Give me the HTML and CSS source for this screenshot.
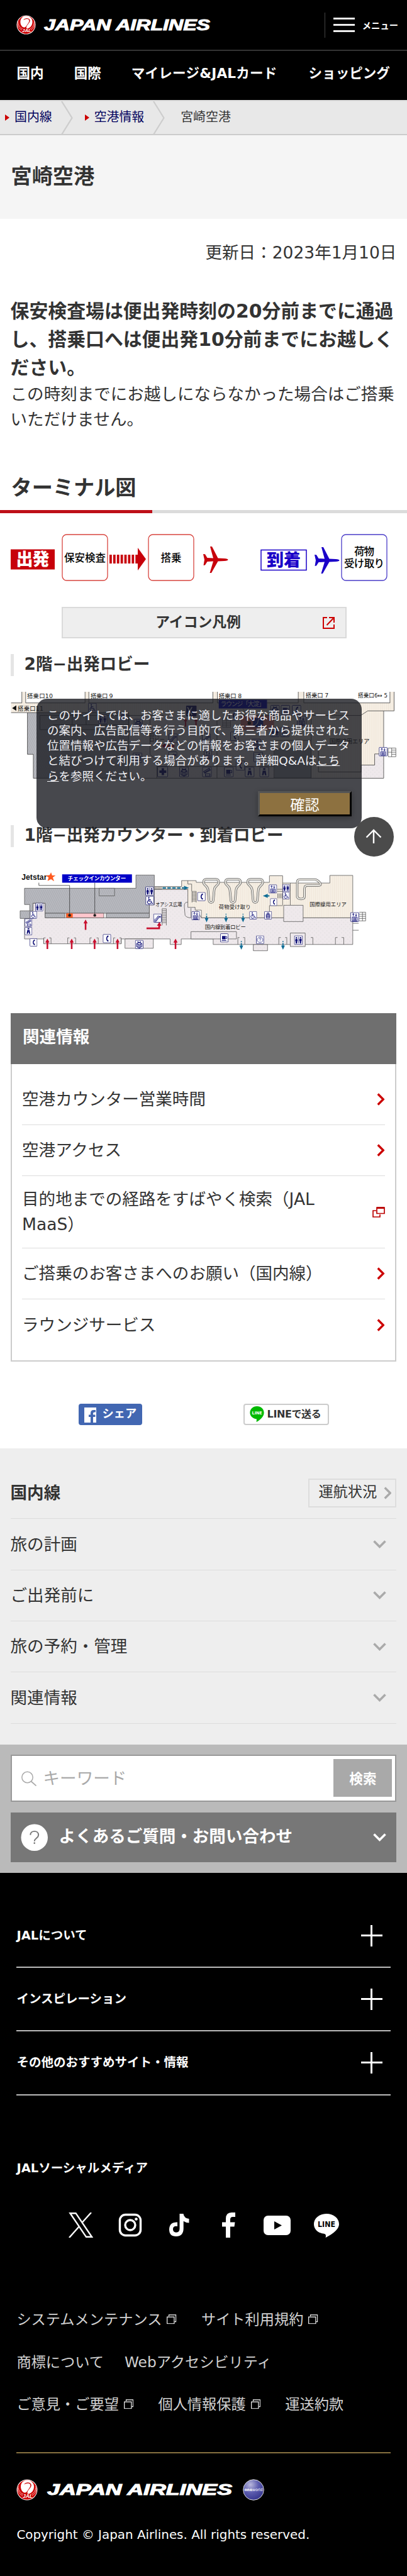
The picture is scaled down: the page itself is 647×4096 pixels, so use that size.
FILE: index.html
```html
<!DOCTYPE html>
<html lang="ja">
<head>
  <meta charset="utf-8">
  <title>宮崎空港 - JAL</title>
  <link rel="stylesheet" href="styles.css">
</head>
<body>
  <!-- shared icons -->
  <svg class="defs" width="0" height="0">
    <defs>
      <symbol id="crane" viewBox="0 0 34 34">
        <circle cx="17" cy="17" r="16.500" fill="#fff"/>
        <circle cx="17" cy="17" r="15.500" fill="#c00"/>
        <path d="M17 1.500C10 2 7 7 7 12c0 5 3 9 6 9.500 3 .5 4-2 6-5s4-5 3-8c-1-2.500-6-2-10 0 3-4 9-4 11-1 3 4-3 8-5 12-1 2.500-.5 4 1 4 5-1 9-5 9-12C28 6 23 1.500 17 1.500z" fill="#fff"/>
        <path d="M3 11c0 7 3 11 8 13M2 14c0 6 3 10 8 12M31 11c0 7-3 11-7 13M32 14c0 6-3 10-7 12" stroke="#fff" stroke-width=".7" fill="none"/>
        <text x="18" y="29.500" text-anchor="middle" font-family="Liberation Sans" font-size="8.500" font-weight="bold" font-style="italic" fill="#fff">JAL</text>
      </symbol>
      <symbol id="chev-right" viewBox="0 0 12 20"><path d="M1.500 1.500L10 10l-8.500 8.500" fill="none" stroke="currentColor" stroke-width="3.400"/></symbol>
      <symbol id="chev-down" viewBox="0 0 21 13"><path d="M1.500 1.500l9 9 9-9" fill="none" stroke="currentColor" stroke-width="3.600"/></symbol>
      <symbol id="window" viewBox="0 0 16 16"><path d="M.7 4.200h11.600v11H.7zM3.600 3V.9h11.600V12H13.200" fill="none" stroke="#fff" stroke-width="1.200"/></symbol>
      <symbol id="plane" viewBox="0 0 40 42"><path d="M0 12l3 .2L6.500 18l9.500.5L11 0h3l9.500 18.500 10 .5c8 .5 8 3.500 0 4l-10 .5L13 42h-2.500l5.500-18.500L6.500 24 3 29.500.5 30 2 21z"/></symbol>

      <pattern id="hatch" width="5" height="5" patternUnits="userSpaceOnUse" patternTransform="rotate(25)">
        <rect width="5" height="5" fill="#b8b9bf"/><path d="M0 0v5" stroke="#9fa1a8" stroke-width="2"/>
      </pattern>
      <pattern id="cream" width="6" height="6" patternUnits="userSpaceOnUse">
        <rect width="6" height="6" fill="#f6efe4"/><path d="M1 0v6" stroke="#efe5d8" stroke-width="1.500"/>
      </pattern>
      <pattern id="floor" width="12" height="12" patternUnits="userSpaceOnUse">
        <rect width="12" height="12" fill="#efe9ec"/><path d="M2 2h3v3H2zM8 8h3v3H8z" fill="#e5e2e3"/>
      </pattern>

      <!-- map pictograms -->
      <symbol id="m-box" viewBox="0 0 26 28"><rect x="1" y="1" width="24" height="26" rx="2" fill="#fff" stroke="#191970" stroke-width="1.600"/></symbol>
      <symbol id="m-wc" viewBox="0 0 26 28"><use href="#m-box"/><g fill="#101078"><circle cx="7" cy="7" r="2.200"/><path d="M4.500 10h5l1.500 7H9.300v7H4.700v-7H3z"/><circle cx="19" cy="7" r="2.200"/><path d="M15.500 10h7v7h-1.500v7h-4v-7h-1.500z"/></g><path d="M13 4v20" stroke="#101078" stroke-width="1.300"/></symbol>
      <symbol id="m-wheel" viewBox="0 0 26 28"><use href="#m-box"/><circle cx="10" cy="5.500" r="2" fill="#101078"/><path d="M10 8v8h7l3 7 2-1M10 11.500h6M8 14a5.500 5.500 0 1 0 8.500 6" fill="none" stroke="#101078" stroke-width="2"/></symbol>
      <symbol id="m-phone" viewBox="0 0 26 28"><use href="#m-box"/><path d="M17 4c-8 3-9 16 0 20l1-5-3-1c-1.500-2-1.500-6 0-8l3-1z" fill="#101078"/></symbol>
      <symbol id="m-lift" viewBox="0 0 26 28"><use href="#m-box"/><path d="M9 11V4M6.500 7L9 4l2.500 3M17 4v7M14.500 8l2.500 3 2.500-3M6 14h14v11H6zM10 16v8M13 16v8M16 16v8" fill="none" stroke="#101078" stroke-width="1.800"/></symbol>
      <symbol id="m-esc" viewBox="0 0 26 28"><use href="#m-box"/><path d="M3 22h5L17 9h6M3 18h4l9-12M17 9h6M3 24h6l9-12h5" fill="none" stroke="#101078" stroke-width="1.700"/></symbol>
      <symbol id="m-gift" viewBox="0 0 26 28"><use href="#m-box"/><path d="M5 11l8-3 8 3v10l-8 4-8-4zM5 11l8 4 8-4M13 15v10M9 13v10M17 13v10M13 8c-6-6-8 0 0 0 6-6 8 0 0 0" fill="none" stroke="#101078" stroke-width="1.900"/></symbol>
      <symbol id="m-cup" viewBox="0 0 26 28"><use href="#m-box"/><path d="M6 8h11v11H6zM5 21h14v2H5z" fill="#101078"/><path d="M17 10h4v6h-4" fill="none" stroke="#101078" stroke-width="1.700"/></symbol>
      <symbol id="m-info" viewBox="0 0 26 28"><use href="#m-box"/><circle cx="13" cy="14" r="9" fill="none" stroke="#101078" stroke-width="1.300"/><path d="M10 12c0-5 6-4 6-1 0 2-3 2-3 5M13 18v2" fill="none" stroke="#101078" stroke-width="1.600"/></symbol>
      <symbol id="m-bag" viewBox="0 0 26 28"><use href="#m-box"/><path d="M7 11h12v12H7zM10 6h6v4h-6zM9 15h8v4H9z" fill="none" stroke="#101078" stroke-width="2"/></symbol>
      <symbol id="m-man" viewBox="0 0 26 28"><use href="#m-box"/><path d="M10 4h6v4h-6zM9 10h8l2 13h-4l-2-8-2 8H7z" fill="#101078"/></symbol>
      <symbol id="m-ticket" viewBox="0 0 26 28"><use href="#m-box"/><path d="M4 13L19 4l3 5L7 17zM9 19h12v6H9zM7 15l13-8" fill="none" stroke="#101078" stroke-width="1.800"/></symbol>
      <symbol id="red-up" viewBox="0 0 14 32"><path d="M7 0l6.500 12H9.500v20h-5V12H.5z" fill="#c8102e"/></symbol>
      <symbol id="blue-down" viewBox="0 0 12 25"><path d="M4.500 0h3v3h-3zM4.500 6h3v7h4L6 25 .5 13h4z" fill="#0f6d96"/></symbol>
      <g id="belt">
        <path d="M-22 38q0-9 9-9h26q9 0 9 9c0 9-13 10-13 22l-3 30a6 6 0 0 1-12 0l-3-30C-9 48-22 47-22 38z" fill="none" stroke="#555" stroke-width="6.500"/>
        <path d="M-22 38q0-9 9-9h26q9 0 9 9c0 9-13 10-13 22l-3 30a6 6 0 0 1-12 0l-3-30C-9 48-22 47-22 38z" fill="none" stroke="#e6e4de" stroke-width="4"/>
      </g>
    </defs>
  </svg>

  <header class="header">
    <a class="logo" href="#">
      <svg class="logo-mark" viewBox="0 0 34 34"><use href="#crane"/></svg>
      <svg class="logo-name" viewBox="0 0 268 28"><text x="1" y="22" textLength="264" lengthAdjust="spacingAndGlyphs">JAPAN AIRLINES</text></svg>
    </a>
    <button class="menu-btn">
      <span class="bars"><i></i><i></i><i></i></span>
      <span>メニュー</span>
    </button>
  </header>

  <nav class="nav">
    <a href="#">国内</a>
    <a href="#">国際</a>
    <a class="mileage" href="#">マイレージ&amp;JALカード</a>
    <a href="#">ショッピング</a>
  </nav>

  <ol class="crumbs">
    <li><a href="#">国内線</a></li>
    <li><svg class="sep" viewBox="0 0 20 53"><path d="M1 0l16.500 26.500L1 53" fill="none" stroke="#cdcdcd" stroke-width="2.200"/></svg></li>
    <li><a href="#">空港情報</a></li>
    <li><svg class="sep" viewBox="0 0 20 53"><path d="M1 0l16.500 26.500L1 53" fill="none" stroke="#cdcdcd" stroke-width="2.200"/></svg></li>
    <li class="current">宮崎空港</li>
  </ol>

  <div class="page-title"><h1>宮崎空港</h1></div>

  <main>
    <p class="date">更新日：2023年1月10日</p>
    <p class="lead"><strong>保安検査場は便出発時刻の20分前までに通過し、搭乗口へは便出発10分前までにお越しください。</strong></p>
    <p class="note">この時刻までにお越しにならなかった場合はご搭乗いただけません。</p>

    <h2>ターミナル図</h2>

    <svg class="flow" viewBox="0 0 614 76">
      <rect x="0" y="24.500" width="70" height="32" fill="#c7000b"/>
      <text x="35" y="50" class="flow-tag" fill="#fff" textLength="53">出発</text>
      <rect x="82" y="1" width="72" height="73" rx="7" class="flow-dep"/>
      <text x="118" y="43.500" textLength="66">保安検査</text>
      <path d="M157 40h46" stroke="#c7000b" stroke-width="14" stroke-dasharray="3.800 2.100"/>
      <path d="M202 22l13 18-13 18z" fill="#c7000b"/>
      <rect x="219" y="1" width="72" height="73" rx="7" class="flow-dep"/>
      <text x="255" y="43.500" textLength="33">搭乗</text>
      <use href="#plane" x="306" y="20" width="40" height="42" fill="#c7000b"/>
      <rect x="398" y="25.500" width="72" height="32" fill="#fff" stroke="#1a00c8" stroke-width="1.500"/>
      <text x="434" y="51" class="flow-tag" fill="#1a00c8" textLength="54">到着</text>
      <use href="#plane" x="483" y="21" width="40" height="42" fill="#1a00c8"/>
      <rect x="526" y="1" width="72" height="73" rx="7" class="flow-arr"/>
      <text x="562" y="34" textLength="32">荷物</text>
      <text x="562" y="52.500" textLength="64">受け取り</text>
    </svg>

    <a class="legend-btn" href="#">
      <span>アイコン凡例</span>
      <svg viewBox="0 0 19 19"><path d="M7 1H1v17h17v-6M10 1h8v8M18 1L6.500 13" fill="none" stroke="#c00" stroke-width="2"/></svg>
    </a>

    <h3 class="floor-2">2階−出発ロビー</h3>
    <svg class="map" viewBox="0 0 1110 250">
      <path d="M0 32H31V0H42V32H213V0H224V32H581V0H594V32H827V0H843V32H1091V0H1103V55H1073V249H64V180H47V60H0z" fill="url(#cream)"/>
      <path d="M47 60H339V249H64V180H47z" fill="url(#hatch)"/>
      <path d="M339 68H757V249H339zM1008 211H1047V179H1073V249H1008z" fill="url(#floor)"/>
      <g fill="none" stroke="#444" stroke-width="1.500">
        <path d="M31 0V32H0M42 0V32H213V0M224 0V32H581V0M594 0V32H827V0M843 0V32H1091V0M1103 0V55H1027L1007 68H860M1073 55V179H1047V211H1008V231H885V165M1073 180V249H64V180H47V60H0M47 60H339V249M83 68H339V109H83zM176 60V95M216 60V95M120 95H339M339 68H440M400 80V180L420 200V249M420 215H757M593 80V249M640 68H820M864 68V249M757 140H864"/>
      </g>
      <rect x="757" y="163" width="107" height="85" fill="#a9adb6" stroke="#444"/>
      <rect x="661" y="69" width="96" height="41" fill="#f08080"/>
      <circle cx="686" cy="90" r="5" fill="#222"/>
      <rect x="598" y="23" width="139" height="25" fill="#0000c8"/>
      <text x="667" y="42" font-size="18" fill="#fff" text-anchor="middle" textLength="128">ラウンジ「大淀」</text>
      <path d="M668 48l10 22" stroke="#444"/>
      <use href="#m-wheel" x="221" y="32" width="26" height="27"/>
      <use href="#m-wc" x="251" y="65" width="26" height="28"/>
      <use href="#m-gift" x="310" y="60" width="24" height="24"/>
      <use href="#m-gift" x="353" y="78" width="26" height="28"/>
      <use href="#m-gift" x="350" y="175" width="28" height="30"/>
      <rect x="504" y="40" width="30" height="31" rx="2" fill="#191970"/>
      <path d="M508 44l13 23M521 44l-13 23" stroke="#fff" stroke-width="3"/>
      <use href="#red-up" x="496" y="75" width="13" height="26"/>
      <use href="#red-up" x="526" y="75" width="13" height="26"/>
      <path d="M434 156l10-8v5h26v6h-26v5z" fill="#c8102e"/>
      <use href="#m-esc" x="453" y="120" width="27" height="28"/>
      <use href="#m-esc" x="549" y="120" width="27" height="28"/>
      <use href="#m-esc" x="452" y="172" width="27" height="28"/>
      <use href="#m-lift" x="555" y="168" width="24" height="28"/>
      <rect x="422" y="216" width="29" height="29" rx="2" fill="#fff" stroke="#191970" stroke-width="1.600"/>
      <path d="M437 220v20M427 230h20" stroke="#101078" stroke-width="7"/>
      <use href="#m-gift" x="483" y="216" width="30" height="30"/>
      <use href="#m-ticket" x="549" y="216" width="30" height="30"/>
      <use href="#m-cup" x="612" y="216" width="30" height="30"/>
      <use href="#m-phone" x="646" y="198" width="28" height="29"/>
      <use href="#m-man" x="673" y="216" width="28" height="30"/>
      <use href="#m-man" x="715" y="216" width="28" height="30"/>
      <use href="#m-gift" x="746" y="38" width="28" height="29"/>
      <use href="#m-cup" x="776" y="38" width="28" height="29"/>
      <use href="#m-phone" x="808" y="38" width="28" height="29"/>
      <use href="#m-phone" x="627" y="54" width="28" height="29"/>
      <rect x="697" y="76" width="29" height="26" fill="#1d2fae"/>
      <path d="M702 98l8-8 2-10 8-2" stroke="#fff" stroke-width="2" fill="none"/>
      <use href="#m-lift" x="823" y="69" width="28" height="30"/>
      <use href="#m-wc" x="746" y="101" width="27" height="30"/>
      <use href="#m-wheel" x="775" y="101" width="27" height="30"/>
      <use href="#m-phone" x="631" y="114" width="25" height="28"/>
      <use href="#m-gift" x="691" y="135" width="29" height="30"/>
      <use href="#m-phone" x="697" y="173" width="29" height="30"/>
      <path d="M609 76h23v26h-23zM609 83h23M609 90h23M609 96h23M620 76v26" fill="none" stroke="#444"/>
      <use href="#m-lift" x="1057" y="159" width="29" height="27"/>
      <path d="M1086 162h22v25h-22zM1086 174h22M1096 162v25M1096 168h12M1096 180h12" fill="none" stroke="#444" stroke-width="1.300"/>
      <g font-size="17" fill="#111">
        <text x="46" y="19" textLength="74">搭乗口10</text>
        <text x="229" y="18" textLength="64">搭乗口 9</text>
        <text x="598" y="18" textLength="66">搭乗口 8</text>
        <text x="848" y="17" textLength="66">搭乗口 7</text>
        <text x="999" y="17" textLength="85" lengthAdjust="spacingAndGlyphs">搭乗口6↔ 5</text>
        <text x="19" y="54" textLength="74">搭乗口11</text>
        <path d="M3 47l12-8v16z"/>
        <text x="398" y="127" font-size="15">出発</text>
        <text x="398" y="144" font-size="15">ロビー</text>
        <text x="917" y="148" textLength="115">国際線用エリア</text>
      </g>
    </svg>

    <h3 class="floor-1">1階−出発カウンター・到着ロビー</h3>
    <svg class="map" viewBox="0 0 1110 250">
      <g stroke="#555" stroke-width="1.400">
        <path d="M38.600 142H63V98H98V140H398V103L412 58H520V95L548 140H984V217H582V201H490V217H458V201H317V215H94V201H38.600z" fill="url(#floor)"/>
        <path d="M38.600 55H359.500V17H412.500V103H398V127H98V98H63V120H53.600V102H38.600z" fill="url(#hatch)"/>
        <path d="M98 127h57v13H98zM274 127h124v13H274zM26 120h27.600v22H26zM253.500 55h44.500v22h-44.500z" fill="url(#hatch)"/>
        <path d="M159 127h108v13H159z" fill="#ffc6cd"/>
        <path d="M491 33H533V38H744V19H782V40H918V18H984V140H548V118H530V110H509V58H412V50H491z" fill="url(#cream)"/>
        <path d="M509 33v10h11v21M744 105h38M744 105v35M804 40v64M782 40v64" fill="none"/>
        <path d="M328 201h81.500v27H328zM518 180h131v21H518zM697.500 217h41v18h-41zM804 184h43v39h-43zM785 104h56v47h-56z" fill="url(#floor)"/>
        <path d="M509 95q-12 0-10 14l2 24q4 7 17 7V112M984 156h17M984 176h17M1003 124h18v25h-18M1003 130h18M1003 136h18M1003 142h18M1012 124v25" fill="none"/>
        <path d="M94 215v-17h5M115 215v-17h-5M163 215v-17h5M186 215v-17h-5M227 215v-17h5M251 215v-17h-5M295 215v-17h5M317 215v-17h-5M653 217v-20h5M673 217v-20h-5M771 217v-20h6M794 217v-20h-5M869 217v-20h-6M934 217v-20h6M958 217v-20h-6" fill="none"/>
        <path d="M412 51v8M416 51v8M420 51v8M424 51v8M428 51v8M432 51v8M521 64h12M521 68h12M521 72h12M521 76h12M521 80h12M521 84h12M521 88h12M521 92h12M435 114h12M435 119h12M435 124h12M435 129h12M435 134h12M435 139h12M435 144h12M435 149h12M435 154h12M435 114v48M447 114v48M521 64v32M533 64v32M768 70v14M772 70v14M776 70v14M780 70v14M766 58h16M766 64h16" fill="none"/>
      </g>
      <rect x="159" y="127.500" width="18.500" height="12" fill="#ff5a1f"/>
      <use href="#belt" x="576"/>
      <use href="#belt" x="639"/>
      <use href="#belt" x="703"/>
      <path d="M824 82V38q0-8 8-8h42q8 0 16 10 4 7-5 7H853q-8 0-8 10V78q0 8-10 8t-11-8" fill="none" stroke="#555" stroke-width="6.500"/>
      <path d="M824 82V38q0-8 8-8h42q8 0 16 10 4 7-5 7H853q-8 0-8 10V78q0 8-10 8t-11-8" fill="none" stroke="#e6e4de" stroke-width="4"/>
      <path d="M80 39v8h88.500v86M241 39v94" fill="none" stroke="#333" stroke-width="1.400"/>
      <circle cx="168.500" cy="133" r="4" fill="#222"/>
      <circle cx="241" cy="133" r="4" fill="#222"/>
      <rect x="147" y="15" width="201" height="24" fill="#0000c8"/>
      <text x="247" y="33" font-size="16" font-weight="bold" fill="#fff" text-anchor="middle" textLength="168">チェックインカウンター</text>
      <text x="30" y="31" font-family="Liberation Sans" font-size="23" font-weight="bold" fill="#111" textLength="73" lengthAdjust="spacingAndGlyphs">Jetstar</text>
      <path d="M115 9l3 9 10 0-8 6 4 11-9-6-10 5 3-10-8-6 11-1z" fill="#ff5a1f"/>
      <g>
        <use href="#m-wc" x="385" y="50" width="28" height="27"/>
        <use href="#m-wheel" x="386" y="77" width="27" height="27"/>
        <use href="#m-wc" x="69" y="97" width="24" height="25"/>
        <use href="#m-wheel" x="53" y="121" width="23" height="22"/>
        <use href="#m-ticket" x="39" y="142" width="22" height="24"/>
        <use href="#m-man" x="39" y="166" width="22" height="25"/>
        <use href="#m-phone" x="53" y="199" width="23" height="24"/>
        <use href="#m-phone" x="263" y="187" width="26" height="26"/>
        <use href="#m-gift" x="356" y="204" width="26" height="26"/>
        <use href="#m-esc" x="409" y="128" width="25" height="26"/>
        <use href="#m-lift" x="519" y="121" width="25" height="26"/>
        <use href="#m-phone" x="535" y="66" width="26" height="26"/>
        <use href="#m-lift" x="742" y="44" width="24" height="26"/>
        <use href="#m-wc" x="781" y="43" width="22" height="23"/>
        <use href="#m-wheel" x="781" y="65" width="22" height="22"/>
        <use href="#m-phone" x="745" y="84" width="22" height="22"/>
        <use href="#m-wheel" x="685" y="121" width="24" height="24"/>
        <use href="#m-bag" x="728" y="121" width="24" height="24"/>
        <use href="#m-cup" x="601" y="185" width="26" height="26"/>
        <use href="#m-info" x="704" y="191" width="26" height="25"/>
        <use href="#m-wc" x="814" y="191" width="27" height="27"/>
        <use href="#m-lift" x="976" y="124" width="27" height="28"/>
      </g>
      <use href="#red-up" x="98" y="199" width="13" height="32"/>
      <use href="#red-up" x="168" y="199" width="13" height="32"/>
      <use href="#red-up" x="234" y="199" width="13" height="32"/>
      <use href="#red-up" x="300" y="199" width="13" height="32"/>
      <use href="#red-up" x="467" y="199" width="13" height="32"/>
      <use href="#red-up" x="208" y="144" width="13" height="32"/>
      <path d="M390 168h34v-5h-4l7-11 6 11h-4v10h-39z" fill="#c8102e"/>
      <use href="#blue-down" x="557" y="128" width="12" height="25"/>
      <use href="#blue-down" x="613" y="128" width="12" height="25"/>
      <use href="#blue-down" x="662" y="128" width="12" height="25"/>
      <use href="#blue-down" x="657" y="207" width="12" height="25"/>
      <use href="#blue-down" x="777" y="207" width="12" height="25"/>
      <path d="M436 54h62" stroke="#0f6d96" stroke-width="4" stroke-dasharray="10 4"/>
      <path d="M498 48l14 6-14 6zM739 71l-14 6 14 6zM739 75h5v4h-5z" fill="#0f6d96"/>
      <g font-size="15" fill="#111">
        <text x="416" y="106" textLength="76" lengthAdjust="spacingAndGlyphs">オアシス広場</text>
        <text x="598" y="115" textLength="92">荷物受け取り</text>
        <text x="558" y="172" textLength="118">国内線到着ロビー</text>
        <text x="860" y="107" textLength="106">国際線用エリア</text>
      </g>
    </svg>

    <section class="related">
      <h2>関連情報</h2>
      <ul>
        <li><a href="#">空港カウンター営業時間</a><svg class="chev"><use href="#chev-right"/></svg></li>
        <li><a href="#">空港アクセス</a><svg class="chev"><use href="#chev-right"/></svg></li>
        <li><a href="#">目的地までの経路をすばやく検索（JAL MaaS）</a><svg class="win" viewBox="0 0 20 18"><path d="M7 2h12v9.500H7zM6 7H1v10h11v-4" fill="none" stroke="#b00" stroke-width="1.700"/><path d="M7 2.500h12" stroke="#b00" stroke-width="3"/></svg></li>
        <li><a href="#">ご搭乗のお客さまへのお願い（国内線）</a><svg class="chev"><use href="#chev-right"/></svg></li>
        <li><a href="#">ラウンジサービス</a><svg class="chev"><use href="#chev-right"/></svg></li>
      </ul>
    </section>

    <div class="share">
      <a class="share-fb" href="#">
        <svg viewBox="0 0 21 24"><path d="M1 0h19v24h-5v-9h3.500v-3.500H15V9.500q0-2 2-2h2V4h-3q-5 0-5 5v2.500H8V15h3v9H1z" fill="#fff"/></svg>
        <span>シェア</span>
      </a>
      <a class="share-line" href="#">
        <svg viewBox="0 0 24 27"><path d="M12 0C5 0 0 5 0 11c0 6 5 10 11 11 1 .5 0 3 0 5 6-3 13-9 13-16C24 5 19 0 12 0z" fill="#00b900"/><text x="12" y="14" text-anchor="middle" font-size="7" font-weight="bold" fill="#fff" textLength="17">LINE</text></svg>
        <span>LINEで送る</span>
      </a>
    </div>
  </main>

  <section class="local-nav">
    <div class="local-head">
      <h2>国内線</h2>
      <a href="#">運航状況<svg class="chev"><use href="#chev-right"/></svg></a>
    </div>
    <ul>
      <li>旅の計画<svg><use href="#chev-down"/></svg></li>
      <li>ご出発前に<svg><use href="#chev-down"/></svg></li>
      <li>旅の予約・管理<svg><use href="#chev-down"/></svg></li>
      <li>関連情報<svg><use href="#chev-down"/></svg></li>
    </ul>
  </section>

  <section class="search-area">
    <form class="search">
      <svg viewBox="0 0 24 24"><circle cx="9.500" cy="10" r="8.700" fill="none" stroke="#aaa" stroke-width="1.500"/><path d="M15.500 16.500l8 7" stroke="#aaa" stroke-width="1.700"/></svg>
      <input type="text" placeholder="キーワード">
      <button type="button">検索</button>
    </form>
    <div class="faq">
      <svg class="faq-icon" viewBox="0 0 44 44"><circle cx="22" cy="22" r="21.500" fill="#fff"/><path d="M15.500 18c0-8 13-8 13 0 0 5-6.500 5-6.500 10" fill="none" stroke="#777" stroke-width="2"/><circle cx="22" cy="31" r="1.300" fill="#777"/></svg>
      <span>よくあるご質問・お問い合わせ</span>
      <svg class="down"><use href="#chev-down"/></svg>
    </div>
  </section>

  <footer>
    <ul class="accordion">
      <li>JALについて<i class="plus"></i></li>
      <li>インスピレーション<i class="plus"></i></li>
      <li>その他のおすすめサイト・情報<i class="plus"></i></li>
    </ul>

    <h2>JALソーシャルメディア</h2>
    <div class="social">
      <svg viewBox="0 0 40 40"><path d="M2.500 1.200h9L37 38.800h-9zM36 0L22 15.500M17 22L1 40" fill="none" stroke="#fff" stroke-width="2.400"/></svg>
      <svg viewBox="0 0 40 40"><rect x="3.500" y="3.500" width="33" height="33" rx="9" fill="none" stroke="#fff" stroke-width="3.400"/><circle cx="20" cy="20" r="8" fill="none" stroke="#fff" stroke-width="3.400"/><circle cx="29.500" cy="10.500" r="2.300" fill="#fff"/></svg>
      <svg viewBox="0 0 40 40"><path d="M20.500 2h6q1 7 9 8v6.500q-5 0-8.800-2.700V26q-.5 12-11.700 12T4 26.500Q4.500 15 17 15.500v6.500q-7-1-7 4.500 0 5 5 5.200 5.500-.2 5.500-6z" fill="#fff"/></svg>
      <svg viewBox="0 0 40 40"><path d="M16 40V22.500H10V15.500h6V10Q16 0 25 0h6v7h-4q-4 0-4 4v4.500h7.500l-1 7H23V40z" fill="#fff"/></svg>
      <svg class="yt" viewBox="0 0 44 40"><rect x="0" y="5" width="43" height="31" rx="7" fill="#fff"/><path d="M17 14l12 6.500-12 6.500z" fill="#000"/></svg>
      <svg viewBox="0 0 40 40"><path d="M20 2C9 2 0 9 0 18.500 0 27 7 33 17 34q3 .5 1.500 6Q40 29 40 18.500C40 9 31 2 20 2z" fill="#fff"/><text x="20" y="23" text-anchor="middle" font-size="11.500" font-weight="bold" fill="#000" textLength="28" lengthAdjust="spacingAndGlyphs">LINE</text></svg>
    </div>

    <div class="links">
      <p><a href="#">システムメンテナンス<svg><use href="#window"/></svg></a><a href="#">サイト利用規約<svg><use href="#window"/></svg></a></p>
      <p><a href="#">商標について</a><a href="#">Webアクセシビリティ</a></p>
      <p><a href="#">ご意見・ご要望<svg><use href="#window"/></svg></a><a href="#">個人情報保護<svg><use href="#window"/></svg></a><a href="#">運送約款</a></p>
    </div>

    <div class="foot-logo">
      <svg class="foot-mark" viewBox="0 0 34 34"><use href="#crane"/></svg>
      <svg class="foot-name" viewBox="0 0 298 29"><text x="1" y="23" textLength="294" lengthAdjust="spacingAndGlyphs">JAPAN AIRLINES</text></svg>
      <svg class="oneworld" viewBox="0 0 34 34">
        <defs><radialGradient id="ow" cx=".35" cy=".25" r=".8"><stop offset="0" stop-color="#b9b8dd"/><stop offset=".5" stop-color="#5b5bae"/><stop offset="1" stop-color="#34348c"/></radialGradient></defs>
        <circle cx="17" cy="17" r="16.300" fill="url(#ow)" stroke="#ddd" stroke-width="1"/>
        <text x="17" y="19" text-anchor="middle" font-size="6.500" fill="#fff" textLength="29" lengthAdjust="spacingAndGlyphs"><tspan font-weight="bold">one</tspan>world</text>
      </svg>
    </div>
    <p class="copy">Copyright © Japan Airlines. All rights reserved.</p>
  </footer>

  <div class="cookie">
    <p>このサイトでは、お客さまに適したお得な商品やサービスの案内、広告配信等を行う目的で、第三者から提供された位置情報や広告データなどの情報をお客さまの個人データと結びつけて利用する場合があります。詳細Q&amp;Aは<a href="#">こち<br>ら</a>を参照ください。</p>
    <button>確認</button>
  </div>
  <a class="to-top" href="#"><svg viewBox="0 0 26 24"><path d="M13 23V2M1.500 13.500L13 2l11.500 11.500" fill="none" stroke="#fff" stroke-width="2.400"/></svg></a>
</body>
</html>
```
FILE: styles.css
```css
* {
  box-sizing: border-box;
  margin: 0;
  padding: 0;
}

body {
  position: relative;
  width: 647px;
  height: 4096px;
  overflow-x: hidden;
  background: #fff;
  color: #333;
  font-family: "DejaVu Sans", "Noto Sans CJK JP", sans-serif;
  font-size: 26.54px;
  line-height: 39.8px;
}

a {
  color: inherit;
  text-decoration: none;
}

ul, ol {
  list-style: none;
}

svg {
  display: block;
  flex: none;
}

.defs {
  position: absolute;
}

/* header */
.header {
  display: flex;
  align-items: center;
  justify-content: space-between;
  height: 81.3px;
  padding: 0 14px 0 26px;
  background: #000;
  border-bottom: 2px solid #333;
}

.logo {
  display: flex;
  align-items: center;
  gap: 12px;
}

.logo-mark {
  width: 31px;
  height: 31px;
}

.logo-name {
  width: 268px;
  height: 28px;
}

.logo-name text,
.foot-name text {
  fill: #fff;
  font-family: "Liberation Sans", sans-serif;
  font-size: 23px;
  font-weight: bold;
  font-style: italic;
  stroke: #fff;
  stroke-width: 1px;
}

.menu-btn {
  display: flex;
  align-items: center;
  gap: 12px;
  height: 40px;
  padding-left: 13px;
  border: none;
  border-left: 1px solid #444;
  background: none;
  color: #fff;
  font-family: inherit;
  font-size: 14.3px;
  font-weight: bold;
}

.bars {
  display: flex;
  flex-direction: column;
  justify-content: space-between;
  width: 34px;
  height: 23px;
}

.bars i {
  height: 3px;
  background: #eee;
}

.nav {
  display: flex;
  align-items: center;
  gap: 48px;
  height: 78px;
  padding: 0 0 7px 26.5px;
  background: #000;
  color: #fff;
  font-size: 21.57px;
  font-weight: bold;
  white-space: nowrap;
}

.nav .mileage {
  margin-right: 2px;
  letter-spacing: .2px;
}

/* breadcrumb */
.crumbs {
  display: flex;
  align-items: center;
  height: 56.2px;
  padding-left: 8px;
  background: #e8e8e8;
  border-top: 2px solid #ddd;
  border-bottom: 2px solid #ccc;
  font-size: 19.9px;
}

.crumbs a {
  display: flex;
  align-items: center;
  gap: 8px;
  color: #00005c;
}

.crumbs a::before {
  content: "";
  border-left: 7px solid #c00;
  border-top: 5.5px solid transparent;
  border-bottom: 5.5px solid transparent;
}

.crumbs .sep {
  width: 20px;
  height: 53px;
  margin: 0 18px 0 14px;
}

.crumbs .current {
  margin-left: 6px;
}

.page-title {
  height: 132.8px;
  padding: 41px 18px 0 17.5px;
  background: #f5f5f5;
}

h1 {
  font-size: 33.18px;
  line-height: 49.8px;
}

/* main */
main {
  height: 1954.6px;
  padding-top: 33.5px;
}

.date,
.lead,
.note {
  padding: 0 16.6px;
}

.date {
  text-align: right;
}

.lead {
  margin-top: 51.5px;
  font-size: 29.86px;
  line-height: 44.8px;
}

main > h2 {
  margin-top: 64px;
  padding: 0 17.5px 10.2px;
  border-bottom: 5px solid;
  border-image: linear-gradient(90deg, #be1018 242px, #dbdbdb 242px) 1;
  font-size: 33.18px;
  line-height: 49.8px;
}

.flow {
  width: 614px;
  height: 76px;
  margin: 32.5px 0 0 16.5px;
}

.flow text {
  font-size: 16.5px;
  font-weight: 500;
  text-anchor: middle;
}

.flow .flow-tag {
  font-size: 27px;
  font-weight: 900;
}

.flow-dep,
.flow-arr {
  fill: #fff;
  stroke: #d8453f;
  stroke-width: 1.3;
}

.flow-arr {
  stroke: #4a3cc8;
}

.legend-btn {
  display: flex;
  align-items: center;
  width: 453px;
  height: 50px;
  margin: 40.5px 0 0 98px;
  padding: 0 17px;
  background: #eee;
  border: 2px solid #dadada;
  font-size: 22.8px;
  font-weight: bold;
}

.legend-btn span {
  flex: 1;
  text-align: center;
}

.legend-btn svg {
  width: 19px;
  height: 19px;
}

h3 {
  height: 35px;
  margin: 24.5px 16.5px 0;
  padding-left: 17px;
  border-left: 5px solid #e5e5e5;
  font-size: 26.54px;
  line-height: 31px;
}

h3.floor-1 {
  margin-top: 74px;
}

.map {
  width: 614px;
  height: 138px;
  margin: 25px 0 0 16.5px;
}

.floor-1 + .map {
  margin-top: 35px;
}

.related {
  margin: 91px 16.6px 0;
}

.related h2 {
  height: 81px;
  padding: 18px 19.5px;
  background: #6f6f6f;
  color: #fff;
  font-size: 26.54px;
  line-height: 39.8px;
}

.related ul {
  height: 473px;
  padding: 16px 16.5px;
  border: 2px solid #ccc;
  border-top: none;
}

.related li {
  display: flex;
  align-items: center;
  justify-content: space-between;
  min-height: 81.4px;
  padding: 15.8px 0;
  border-bottom: 1.66px solid #ddd;
}

.related li:nth-child(3) {
  height: 114.5px;
}

.related li:last-child {
  border: none;
}

.related li a {
  width: 500px;
}

.chev {
  width: 12.5px;
  height: 20px;
  color: #c00;
}

.win {
  width: 20px;
  height: 18px;
}

.share {
  display: flex;
  margin-top: 67.5px;
}

.share a {
  display: flex;
  align-items: center;
  height: 33.5px;
  border-radius: 4px;
  font-weight: bold;
  white-space: nowrap;
}

.share-fb {
  width: 101px;
  margin: 0 161px 0 124.6px;
  padding: 3px 6px 0 8px;
  gap: 9px;
  background: #4267b2;
  color: #fff;
  font-size: 18.2px;
}

.share-fb svg {
  width: 21px;
  height: 24px;
}

.share-fb span {
  margin-top: -5px;
}

.share-line {
  width: 136px;
  padding: 0 8px;
  gap: 5px;
  border: 2px solid #ccc;
  font-size: 16px;
  letter-spacing: -.4px;
}

.share-line svg {
  width: 23px;
  height: 25px;
}

/* local navigation */
.local-nav {
  height: 471px;
  padding: 48px 16.6px 0;
  background: #eee;
}

.local-head {
  display: flex;
  justify-content: space-between;
  height: 64.6px;
  border-bottom: 1.66px solid #ddd;
}

.local-head h2 {
  padding-top: 3px;
  font-size: 26.54px;
}

.local-head a {
  display: flex;
  align-items: center;
  justify-content: space-between;
  width: 140px;
  height: 46.5px;
  padding: 0 6px 4px 14px;
  border: 2px solid #ddd;
  font-size: 23.22px;
}

.local-head .chev {
  margin-top: 4px;
  color: #aaa;
}

.local-nav li {
  display: flex;
  align-items: center;
  justify-content: space-between;
  height: 81.3px;
  padding-right: 16px;
  border-bottom: 1.66px solid #ddd;
}

.local-nav li svg,
.faq .down {
  width: 21px;
  height: 13px;
  color: #aaa;
}

/* search */
.search-area {
  height: 204.1px;
  padding: 16.5px 16.6px;
  background: #bababa;
}

.search {
  display: flex;
  align-items: center;
  height: 75px;
  padding: 0 5px 0 15px;
  background: #fff;
  border: 2px solid #999;
}

.search svg {
  width: 24px;
  height: 24px;
}

.search input {
  flex: 1;
  min-width: 0;
  height: 60px;
  margin-left: 11px;
  padding: 0 0 1px;
  border: none;
  outline: none;
  font-family: inherit;
  font-size: 26.54px;
}

.search input::placeholder {
  color: #a9a9a9;
}

.search button {
  width: 93px;
  height: 60px;
  margin-top: -2px;
  border: none;
  background: #a9a9a9;
  color: #fff;
  font-family: inherit;
  font-size: 21.57px;
  font-weight: bold;
}

.faq {
  display: flex;
  align-items: center;
  height: 79.6px;
  margin-top: 16.5px;
  padding: 0 16.5px;
  background: #777;
  color: #fff;
  font-weight: bold;
}

.faq-icon {
  width: 43.5px;
  height: 43.5px;
}

.faq span {
  flex: 1;
  margin: -4px 0 0 17px;
}

.faq .down {
  color: #fff;
}

/* footer */
footer {
  height: 1118px;
  padding: 50px 26.4px 0;
  background: #000;
  color: #fff;
}

.accordion li {
  display: flex;
  align-items: center;
  justify-content: space-between;
  height: 101.2px;
  border-bottom: 2px solid #bbb;
  padding-right: 13px;
  font-size: 19.5px;
  font-weight: bold;
}

.plus {
  width: 34px;
  height: 34px;
  background:
    linear-gradient(#fff, #fff) center / 100% 3px no-repeat,
    linear-gradient(#fff, #fff) center / 3px 100% no-repeat;
}

footer h2 {
  margin-top: 96px;
  font-size: 19.5px;
}

.social {
  display: flex;
  gap: 38px;
  margin: 51px 0 0 83px;
}

.social svg {
  width: 40px;
  height: 40px;
}

.social .yt {
  width: 44px;
  margin: 0 -2px;
}

.links {
  margin-top: 96px;
  color: #d2d2d2;
  font-size: 23.22px;
}

.links p {
  display: flex;
  gap: 33px;
  height: 67.5px;
  line-height: 67.5px;
}

.links a {
  display: flex;
  align-items: center;
  white-space: nowrap;
}

.links svg {
  width: 15.5px;
  height: 15.5px;
  margin: 0 6px 0 8px;
}

.foot-logo {
  display: flex;
  align-items: center;
  margin-top: 42px;
  padding-top: 41px;
  border-top: 2px solid #86703f;
}

.foot-mark,
.oneworld {
  width: 34px;
  height: 34px;
}

.foot-name {
  width: 298px;
  height: 29px;
  margin: 0 14px;
}

.copy {
  margin-top: 35px;
  font-size: 19.9px;
}

/* overlays */
.cookie {
  position: absolute;
  top: 1111px;
  left: 58px;
  width: 517px;
  height: 206px;
  padding: 15px 16px 0 17px;
  background: rgba(25, 26, 32, .8);
  border-radius: 17px;
  color: #f0f0f4;
  font-size: 18.5px;
  line-height: 24.15px;
}

.cookie a {
  text-decoration: underline;
}

.cookie button {
  display: block;
  width: 149px;
  height: 40px;
  margin: 11px 0 0 auto;
  background: #8d7140;
  border: 3px solid;
  border-color: #555 #000 #000 #555;
  box-shadow: 0 2px 8px rgba(0, 0, 0, .3);
  color: #fff;
  font-family: inherit;
  font-size: 23.22px;
}

.to-top {
  position: absolute;
  top: 1298.7px;
  left: 562.5px;
  display: flex;
  align-items: center;
  justify-content: center;
  width: 63.5px;
  height: 63.5px;
  background: #4b4b4b;
  border-radius: 50%;
}

.to-top svg {
  width: 26px;
  height: 24px;
}
```
